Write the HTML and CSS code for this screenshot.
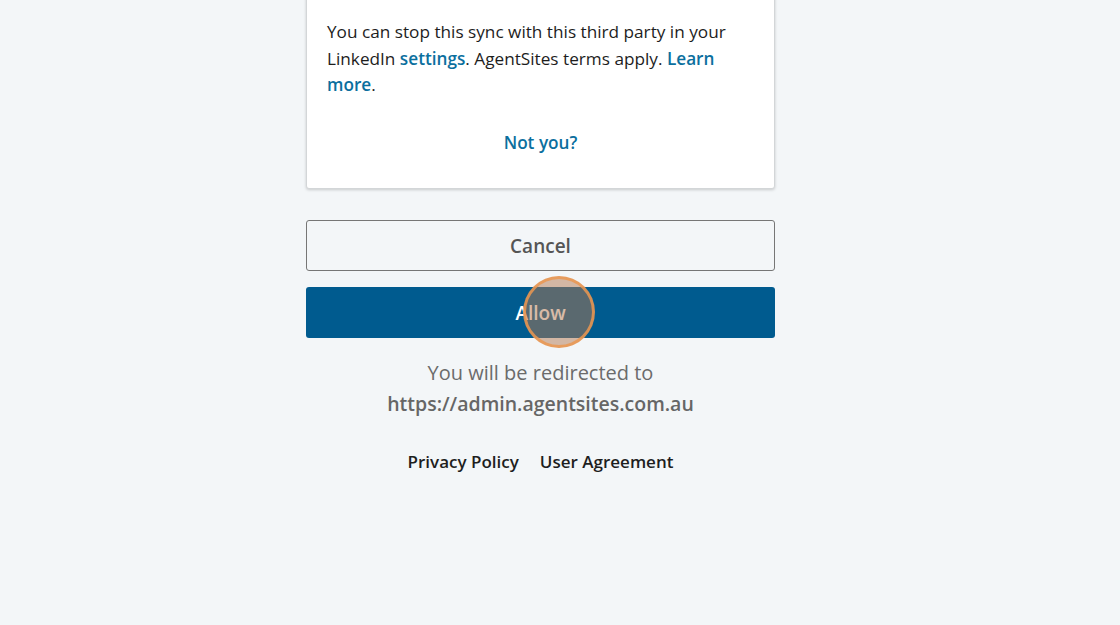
FILE: index.html
```html
<!DOCTYPE html>
<html lang="en">
<head>
<meta charset="utf-8">
<title>Authorize</title>
<link rel="stylesheet" href="styles.css">
</head>
<body>
<main class="page">
  <section class="card">
    <p class="notice">You can stop this sync with this third party in your LinkedIn <a href="#">settings</a>. AgentSites terms apply. <a href="#">Learn more</a>.</p>
    <div class="not-you"><a href="#">Not you?</a></div>
  </section>
  <div class="actions">
    <button class="btn btn-secondary" type="button">Cancel</button>
    <button class="btn btn-primary" type="button">Allow<span class="click-marker"></span></button>
  </div>
  <p class="redirect">You will be redirected to<br><strong>https://admin.agentsites.com.au</strong></p>
  <nav class="footer-links">
    <a href="#">Privacy Policy</a>
    <a href="#">User Agreement</a>
  </nav>
</main>
</body>
</html>
```
FILE: styles.css
```css
html, body {
  margin: 0;
  padding: 0;
  background: #f3f6f8;
  font-family: "Open Sans", "Noto Sans", sans-serif;
  color: #222;
}
.page {
  width: 469px;
  margin-left: 306px;
  display: flex;
  flex-direction: column;
}
.card {
  background: #fff;
  border: 1px solid #d3d6d8;
  border-radius: 3px;
  box-shadow: 0 1px 3px rgba(0,0,0,0.18);
  margin-top: -20px;
  padding: 20px 30px 0 20px;
  height: 209px;
  box-sizing: border-box;
}
.notice {
  margin: 18px 0 0;
  font-size: 17.2px;
  line-height: 26.5px;
  color: #1d1d1d;
}
.notice a, .not-you a {
  color: #0b6f9e;
  font-weight: 600;
  text-decoration: none;
}
.not-you {
  text-align: center;
  margin-top: 31px;
  margin-right: -10px;
  font-size: 17.2px;
  line-height: 26px;
}
.actions {
  display: flex;
  flex-direction: column;
  gap: 16px;
  margin-top: 31px;
}
.btn {
  position: relative;
  width: 100%;
  height: 51px;
  border-radius: 3px;
  font-family: inherit;
  font-size: 19px;
  font-weight: 600;
  cursor: pointer;
}
.btn-secondary {
  background: #f3f6f8;
  border: 1.5px solid #767676;
  color: #555;
}
.btn-primary {
  background: #005b8f;
  border: none;
  color: #fff;
}
.click-marker {
  position: absolute;
  left: 219px;
  top: -9px;
  width: 66px;
  height: 66px;
  border-radius: 50%;
  border: 3px solid rgba(235, 150, 80, 0.85);
  background: rgba(180, 120, 80, 0.5);
  box-sizing: content-box;
  transform: translate(-2px, -2px);
}
.redirect {
  margin: 19px 0 0;
  text-align: center;
  font-size: 20px;
  line-height: 31px;
  color: #6b6b6b;
}
.redirect strong {
  font-weight: 600;
  color: #666;
  font-size: 19.5px;
}
.footer-links {
  display: flex;
  justify-content: center;
  gap: 21px;
  margin-top: 31px;
}
.footer-links a {
  color: #1e1e1e;
  font-weight: 600;
  font-size: 17px;
  text-decoration: none;
}
```
